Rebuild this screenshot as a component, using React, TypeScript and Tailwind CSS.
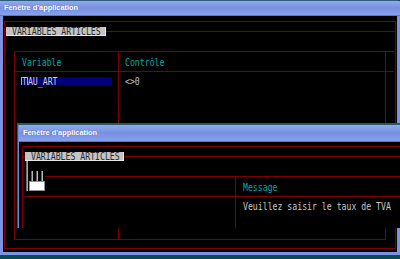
import React from 'react';

const RED = 'bg-[#800000]';

function Dos({ children, className = '' }: { children: React.ReactNode; className?: string }) {
  return (
    <span
      className={`inline-block origin-center scale-y-[1.25] whitespace-pre font-['DejaVu_Sans_Mono',monospace] text-[8.2px] leading-[8px] ${className}`}
    >
      {children}
    </span>
  );
}

function TitleBar({ height, pad }: { height: string; pad: string }) {
  return (
    <div
      className={`flex ${height} ${pad} items-center border-b border-[#5d74c8] bg-gradient-to-b from-[#93a9ee] via-[#7890e0] to-[#88a2ee]`}
    >
      <span className="font-['Liberation_Sans',Arial,sans-serif] text-[7.4px] font-bold leading-none text-white [text-shadow:0_0_1px_rgba(40,60,140,0.6)]">
        Fenêtre d'application
      </span>
    </div>
  );
}

function Label({ width }: { width: string }) {
  return (
    <div className={`flex h-[9px] ${width} items-center bg-[#c4c4c4] pl-[6px] border-r border-b border-[#e8e8e8]`}>
      <Dos className="text-[#2c2c2c]">VARIABLES ARTICLES</Dos>
    </div>
  );
}

export default function App() {
  return (
    <div className="relative h-[259px] w-[400px] overflow-hidden bg-[#0b4a54]">
      {/* Main window */}
      <div className="flex h-[255px] flex-col rounded-tr-[4px] border-t border-[#2f5c7c] bg-[#7b93e2]">
        <TitleBar height="h-[15px]" pad="pl-[4px]" />
        <div className="mx-[3px] mb-[3px] flex flex-1 flex-col bg-black px-[1px] pb-[3px] pt-[5px]">
          <div className="flex flex-1 flex-col border border-[#800000]">
            <div className="mt-[5px] flex h-[9px] items-center">
              <div className={`h-px w-[1px] ${RED}`} />
              <Label width="w-[100px]" />
              <div className={`h-px flex-1 ${RED}`} />
            </div>

            <div className="mb-[8px] ml-[9px] mt-[15px] flex w-[380px] flex-1 flex-col">
              <div className="h-[21px] border-y border-[#800000]">
                <div className="flex h-full w-[372px] border-x border-[#800000]">
                  <div className="flex w-[104px] items-center border-r border-[#800000] pl-[7px]">
                    <Dos className="text-[#00a8a8]">Variable</Dos>
                  </div>
                  <div className="flex items-center pl-[6px]">
                    <Dos className="text-[#00a8a8]">Contrôle</Dos>
                  </div>
                </div>
              </div>
              <div className="flex w-[372px] flex-1 border-x border-b border-[#800000]">
                <div className="w-[104px] border-r border-[#800000] pl-[6px] pt-[5px]">
                  <div className="flex h-[8px] w-[91px] items-center bg-[#00007c]">
                    <span className="flex h-[8px] items-center border-x border-[#b0b0b0]">
                      <Dos className="text-[#d0d0d0]">T</Dos>
                    </span>
                    <Dos className="text-[#d0d0d0]">AU_ART</Dos>
                  </div>
                </div>
                <div className="pl-[6px] pt-[5px]">
                  <div className="flex h-[8px] items-center">
                    <Dos className="text-[#c8c8c8]">{'<>0'}</Dos>
                  </div>
                </div>
              </div>
            </div>
          </div>
        </div>
      </div>

      {/* Second window */}
      <div className="absolute left-[17px] top-[123px] flex h-[105px] w-[400px] flex-col border-l border-t-2 border-[#1f5d68] bg-black">
        <div className="flex flex-1 flex-col border-l border-[#6f88d8]">
          <TitleBar height="h-[17px]" pad="pl-[4px]" />
          <div className="relative flex flex-1 flex-col pl-[3px] pt-[4px]">
            <div className="flex flex-1 flex-col border-l border-t border-[#800000]">
              <div className="mt-[5px] flex h-[9px] items-center">
                <div className={`h-px w-[2px] ${RED}`} />
                <Label width="w-[99px]" />
                <div className={`h-px flex-1 ${RED}`} />
              </div>

              <div className="ml-[2px] mt-[15px] flex flex-1 flex-col">
                <div className="flex h-[21px] border-b border-[#800000]">
                  <div className="w-[20px]" />
                  <div className="flex flex-1 border-t border-[#800000]">
                    <div className="w-[191px] border-r border-[#800000]" />
                    <div className="flex items-center pl-[7px]">
                      <Dos className="text-[#00a8a8]">Message</Dos>
                    </div>
                  </div>
                </div>
                <div className="flex flex-1">
                  <div className="w-[211px] border-r border-[#800000]" />
                  <div className="pl-[7px] pt-[5px]">
                    <div className="flex h-[8px] items-center">
                      <Dos className="text-[#c8c8c8]">Veuillez saisir le taux de TVA</Dos>
                    </div>
                  </div>
                </div>
              </div>
            </div>

            {/* cursor artefact */}
            <div className="absolute left-[7px] top-[19px] h-[30px] w-[2px] bg-[#a8a8a8] border-l border-[#707070]" />
            <div className="absolute left-[12px] top-[29px] h-[10px] w-[2px] bg-[#b8b8b8] border-l border-[#606060]" />
            <div className="absolute left-[17px] top-[29px] h-[10px] w-[2px] bg-[#b8b8b8] border-l border-[#606060]" />
            <div className="absolute left-[22px] top-[29px] h-[10px] w-[2px] bg-[#b8b8b8] border-l border-[#606060]" />
            <div className="absolute left-[10px] top-[39px] h-[10px] w-[16px] border border-[#909090] bg-white" />
          </div>
        </div>
      </div>
    </div>
  );
}
